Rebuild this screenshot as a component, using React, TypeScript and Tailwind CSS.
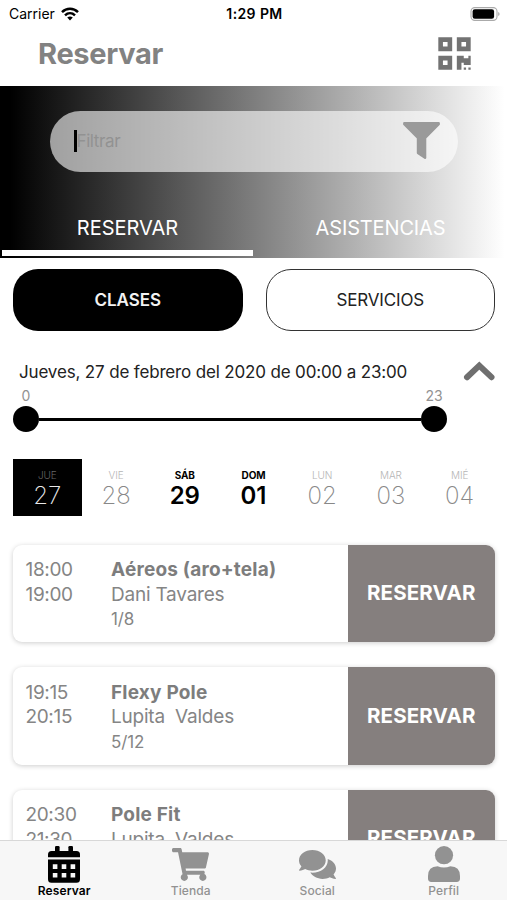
import React from "react";
import { FaComments, FaQrcode, FaShoppingCart } from "react-icons/fa";

function StatusBar() {
  return (
    <div className="grid h-7 grid-cols-3 items-center pl-[9px] pr-[7px] text-black">
      <div className="flex items-center gap-[6px]">
        <span className="text-[14px] leading-none">Carrier</span>
        <svg className="h-[14px] w-[18px]" viewBox="0 0 18 14">
          <g fill="none" stroke="#000" strokeWidth="2.5">
            <path d="M1 5.2C5.6 0.7 12.4 0.7 17 5.2" />
            <path d="M4 8.3C6.9 5.6 11.1 5.6 14 8.3" />
          </g>
          <path d="M9 13.4 6.2 10.6Q9 8.4 11.8 10.6Z" />
        </svg>
      </div>
      <div className="text-center text-[14px] font-semibold leading-none tracking-[0.4px]">1:29 PM</div>
      <svg className="h-[14px] w-[30px] justify-self-end" viewBox="0 0 30 14">
        <rect x="1" y="0.6" width="26" height="12.8" rx="3.8" fill="none" stroke="#aaa" strokeWidth="1.1" />
        <rect x="2.6" y="2.3" width="21.5" height="9.4" rx="2.2" />
        <path d="M28.2 5v4q1.4-.7 1.4-2t-1.4-2" fill="#aaa" />
      </svg>
    </div>
  );
}

function FunnelIcon() {
  return (
    <svg className="h-[38px] w-[37px] text-[#9a9a9a]" viewBox="0 0 37 38">
      <path
        d="M1.3 1.3H35.7V2.2L22.1 16V35.8L15 31V16L1.3 2.2Z"
        fill="currentColor"
        stroke="currentColor"
        strokeWidth="2.4"
        strokeLinejoin="round"
      />
    </svg>
  );
}

function CalendarIcon() {
  return (
    <svg className="h-[37px] w-[32px]" viewBox="0 0 32 37" fill="currentColor">
      <rect x="7" y="0" width="4.6" height="8" rx="1.2" />
      <rect x="20.4" y="0" width="4.6" height="8" rx="1.2" />
      <path d="M3.5 5H28.5Q32 5 32 8.5V11.2H0V8.5Q0 5 3.5 5Z" />
      <path
        fillRule="evenodd"
        d="M0 13.5H32V33.2Q32 36.7 28.5 36.7H3.5Q0 36.7 0 33.2ZM4.8 18.3v4.6h4.6v-4.6zM13.7 18.3v4.6h4.6v-4.6zM22.6 18.3v4.6h4.6v-4.6zM4.8 27v4.6h4.6V27zM13.7 27v4.6h4.6V27zM22.6 27v4.6h4.6V27z"
      />
    </svg>
  );
}

function PersonIcon() {
  return (
    <svg className="h-[36px] w-[32px]" viewBox="0 0 32 36" fill="currentColor">
      <circle cx="16" cy="9.2" r="9.1" />
      <path d="M9.6 20.2Q16 22.8 22.4 20.2Q32 20.4 32 30V32.6Q32 36 28.6 36H3.4Q0 36 0 32.6V30Q0 20.4 9.6 20.2Z" />
    </svg>
  );
}

const days = [
  { name: "JUE", date: "27", kind: "selected" },
  { name: "VIE", date: "28", kind: "muted" },
  { name: "SÁB", date: "29", kind: "strong" },
  { name: "DOM", date: "01", kind: "strong" },
  { name: "LUN", date: "02", kind: "muted" },
  { name: "MAR", date: "03", kind: "muted" },
  { name: "MIÉ", date: "04", kind: "muted" },
];

const dayStyles: Record<string, { box: string; name: string; date: string }> = {
  selected: { box: "bg-black", name: "font-light text-[#666]", date: "font-extralight text-[#e8e8e8]" },
  muted: { box: "", name: "font-light text-[#b5b5b5]", date: "font-extralight text-[#888]" },
  strong: { box: "", name: "font-bold text-black", date: "font-semibold text-black" },
};

const classes = [
  { start: "18:00", end: "19:00", title: "Aéreos (aro+tela)", coach: "Dani Tavares", spots: "1/8" },
  { start: "19:15", end: "20:15", title: "Flexy Pole", coach: "Lupita  Valdes", spots: "5/12" },
  { start: "20:30", end: "21:30", title: "Pole Fit", coach: "Lupita  Valdes", spots: "2/12" },
];

const tabs = [
  { label: "Reservar", icon: <CalendarIcon />, active: true },
  { label: "Tienda", icon: <FaShoppingCart className="h-[33px] w-[37px]" />, active: false },
  { label: "Social", icon: <FaComments className="h-[37px] w-[37px]" />, active: false },
  { label: "Perfil", icon: <PersonIcon />, active: false },
];

export default function App() {
  return (
    <div className="flex h-[900px] w-[507px] flex-col overflow-hidden bg-white font-['Inter',sans-serif]">
      <StatusBar />
      <header className="flex h-[58px] shrink-0 items-center justify-between pb-[7px] pl-[38px] pr-[36px] text-[#828282]">
        <h1 className="text-[29px] font-bold leading-none tracking-[-0.3px]">Reservar</h1>
        <FaQrcode className="h-[37px] w-[33px] text-[#737373]" />
      </header>

      <section className="flex h-[171.5px] shrink-0 flex-col bg-[linear-gradient(90deg,#000_2%,#fff_99.5%)] pt-[24.5px]">
        <div className="ml-[50px] mr-[49px] flex h-[61.5px] shrink-0 items-center justify-between rounded-full bg-white/60 pl-[24px] pr-[18px]">
          <div className="flex items-center">
            <span className="h-[22px] w-[2.5px] bg-black" />
            <span className="text-[17px] leading-none tracking-[-0.4px] text-[#929292]">Filtrar</span>
          </div>
          <FunnelIcon />
        </div>
        <nav className="mt-auto grid grid-cols-2 pl-[1px] text-center text-[20px] text-white">
          <div className="flex flex-col items-center">
            <span className="leading-[43px]">RESERVAR</span>
            <span className="mb-[1.5px] h-[6px] w-[251px] bg-white" />
          </div>
          <div className="leading-[43px] tracking-[-0.15px]">ASISTENCIAS</div>
        </nav>
      </section>

      <div className="mt-[11.5px] grid h-[62px] shrink-0 grid-cols-2 gap-[23px] pl-[13px] pr-[12px] text-[17px]">
        <button className="rounded-[25px] bg-black pt-[2px] font-semibold tracking-[-0.05px] text-[#f2f2f2]">CLASES</button>
        <button className="rounded-[25px] border-[1.5px] border-[#333] pt-[2px] tracking-[-0.15px] text-[#222]">SERVICIOS</button>
      </div>

      <div className="mt-[29px] flex h-6 shrink-0 items-center justify-between pl-[19px] pr-[11px]">
        <p className="pt-[2px] text-[17px] tracking-[-0.16px] text-[#222]">Jueves, 27 de febrero del 2020 de 00:00 a 23:00</p>
        <svg className="h-[22px] w-[34px]" viewBox="0 0 34 22">
          <path d="M5 16.2 17.3 4.6 29.5 16.2" fill="none" stroke="#6f6f6f" strokeWidth="6" strokeLinecap="round" />
        </svg>
      </div>

      <div className="ml-[13px] mt-[2px] w-[434px] shrink-0">
        <div className="flex justify-between text-[14px] leading-[20px] text-[#929292]">
          <span className="w-[26px] text-center">0</span>
          <span className="w-[26px] text-center">23</span>
        </div>
        <div className="flex items-center">
          <span className="size-[26px] rounded-full bg-black" />
          <span className="h-[3px] flex-1 bg-black" />
          <span className="size-[26px] rounded-full bg-black" />
        </div>
      </div>

      <div className="ml-[13px] mt-[27px] grid h-[57px] w-[481px] shrink-0 grid-cols-7">
        {days.map((d) => {
          const s = dayStyles[d.kind];
          return (
            <div key={d.date} className={"flex flex-col items-center pt-[10px] " + s.box}>
              <span className={"text-[10px] leading-[13px] tracking-[-0.1px] " + s.name}>{d.name}</span>
              <span className={"text-[24px] leading-[27px] " + s.date}>{d.date}</span>
            </div>
          );
        })}
      </div>

      <main className="flex min-h-0 flex-1 flex-col gap-[25px] overflow-hidden px-[13px] pt-[28.5px] text-[#858585]">
        {classes.map((c) => (
          <article key={c.start} className="flex h-[97.5px] w-[481.5px] shrink-0 overflow-clip rounded-[9px] bg-white shadow-[0_1px_5px_rgba(0,0,0,0.2)]">
            <div className="w-[98px] pl-[12.5px] pt-[13.5px] text-[19px] leading-[24.5px] tracking-[-0.35px]">
              <div>{c.start}</div>
              <div>{c.end}</div>
            </div>
            <div className="flex-1 whitespace-pre pt-[13.5px] text-[19px] leading-[24.5px]">
              <div className="font-bold tracking-[0.2px] text-[#7d7d7d]">{c.title}</div>
              <div className="tracking-[-0.22px]">{c.coach}</div>
              <div className="text-[17px] tracking-[-0.1px]">{c.spots}</div>
            </div>
            <button className="w-[146.5px] bg-[#857f7e] pt-[1px] text-[20.5px] font-bold tracking-[0.15px] text-white">RESERVAR</button>
          </article>
        ))}
      </main>

      <footer className="z-10 grid h-[60px] shrink-0 grid-cols-4 border-t border-[#d8d8d8] bg-[#f7f7f7] pl-[1px]">
        {tabs.map((t) => (
          <div key={t.label} className={"flex flex-col items-center " + (t.active ? "text-black" : "text-[#929292]")}>
            <div className="mt-[3px] flex h-[40px] items-center">{t.icon}</div>
            <span className={"text-[12px] leading-[14px] tracking-[0.1px] " + (t.active ? "font-semibold" : "font-medium")}>{t.label}</span>
          </div>
        ))}
      </footer>
    </div>
  );
}
